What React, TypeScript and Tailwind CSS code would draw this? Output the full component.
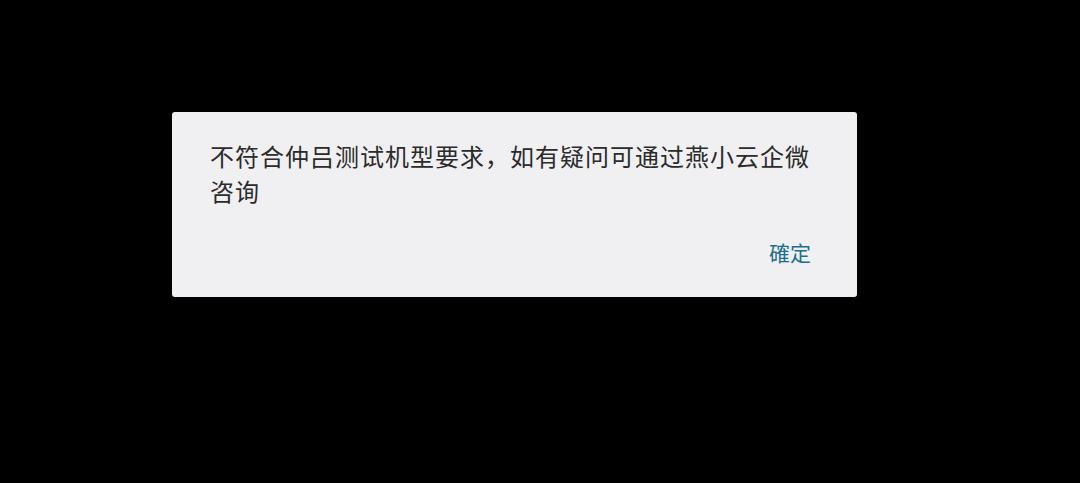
import React from 'react';

const font = "font-['Noto_Sans_CJK_SC','Noto_Sans',sans-serif]";

const App: React.FC = () => {
  return (
    <div className={`w-[1080px] h-[483px] bg-black pt-[112px] pl-[172px] ${font}`}>
      <div className="w-[685px] h-[185px] bg-[#f0f0f2] rounded-[3px] flex flex-col">
        <p className="pt-[26px] pl-[38px] pr-[40px] text-[24px] leading-[35px] text-[#2b2b2b] tracking-[1px]">
          不符合仲吕测试机型要求，如有疑问可通过燕小云企微咨询
        </p>
        <div className="flex justify-end pr-[46px] mt-[29px]">
          <button className="text-[21px] leading-[30px] text-[#1d6f8e]">確定</button>
        </div>
      </div>
    </div>
  );
};

export default App;
